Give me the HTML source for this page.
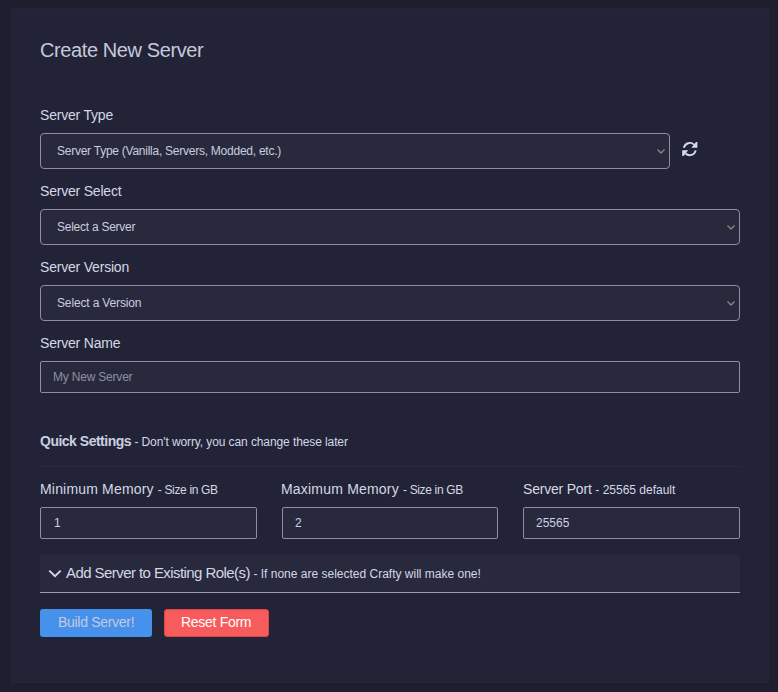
<!DOCTYPE html>
<html>
<head>
<meta charset="utf-8">
<style>
html,body{margin:0;padding:0;}
body{width:778px;height:692px;background:#1f1e2e;position:relative;overflow:hidden;font-family:"Liberation Sans",sans-serif;}
.card{position:absolute;left:11px;top:8px;width:758px;height:675px;background:#232337;box-shadow:inset 0 0 0 1px rgba(255,255,255,0.012);}
.t{position:absolute;white-space:pre;line-height:1;}
.title{left:40px;top:40px;font-size:20px;color:#c4cadb;letter-spacing:-0.4px;}
.lbl{font-size:14px;color:#d2d8e6;letter-spacing:-0.2px;}
.sel{position:absolute;left:40px;height:34px;border:1px solid #8d8da8;border-radius:4px;background:#29293e;box-sizing:content-box;}
.seltxt{font-size:12px;color:#c7cede;letter-spacing:-0.25px;}
.chev{position:absolute;width:8px;height:5px;}
.inp{position:absolute;height:30px;border:1px solid #8d8da8;border-radius:2px;background:#29293e;}
.ph{font-size:12px;color:#8b909f;letter-spacing:-0.2px;}
.hr{position:absolute;left:40px;top:466px;width:700px;height:1px;background:#2b2b3f;}
.sub{font-size:12px;color:#d2d8e6;letter-spacing:-0.2px;}
.val{font-size:12px;color:#cbd2e2;}
.coll{position:absolute;left:40px;top:555px;width:700px;height:37px;background:#29293e;border-radius:3px 3px 0 0;border-bottom:1px solid #9a9ab2;}
.btn{position:absolute;top:609px;height:28px;border-radius:3px;}
</style>
</head>
<body>
<div class="card"></div>

<div class="t title">Create New Server</div>

<!-- Server Type -->
<div class="t lbl" style="left:40px;top:108px;">Server Type</div>
<div class="sel" style="top:133px;width:628px;"></div>
<div class="t seltxt" style="left:57px;top:145px;">Server Type (Vanilla, Servers, Modded, etc.)</div>
<svg class="chev" style="left:657px;top:149px" viewBox="0 0 8 5"><path d="M0.5 0.5 L4 4 L7.5 0.5" fill="none" stroke="#86867e" stroke-width="1.35"/></svg>
<svg style="position:absolute;left:681.6px;top:141.8px;width:16px;height:15px;overflow:visible" viewBox="0 0 16 15"><g fill="none" stroke="#d3dbee" stroke-width="1.9"><path d="M1.86 5.75 A6.1 6.1 0 0 1 12.0 2.6"/><path d="M13.74 8.35 A6.1 6.1 0 0 1 3.6 11.5"/></g><g fill="#d3dbee"><path d="M14.0 0.1 L15.4 0.1 L15.4 5.8 L9.4 5.8 Z"/><path d="M0.2 8.3 L6.2 8.3 L1.6 14.0 L0.2 14.0 Z"/></g></svg>

<!-- Server Select -->
<div class="t lbl" style="left:40px;top:184px;">Server Select</div>
<div class="sel" style="top:209px;width:698px;"></div>
<div class="t seltxt" style="left:57px;top:221px;">Select a Server</div>
<svg class="chev" style="left:727px;top:225px" viewBox="0 0 8 5"><path d="M0.5 0.5 L4 4 L7.5 0.5" fill="none" stroke="#86867e" stroke-width="1.35"/></svg>

<!-- Server Version -->
<div class="t lbl" style="left:40px;top:260px;">Server Version</div>
<div class="sel" style="top:285px;width:698px;"></div>
<div class="t seltxt" style="left:57px;top:297px;letter-spacing:-0.15px">Select a Version</div>
<svg class="chev" style="left:727px;top:301px" viewBox="0 0 8 5"><path d="M0.5 0.5 L4 4 L7.5 0.5" fill="none" stroke="#86867e" stroke-width="1.35"/></svg>

<!-- Server Name -->
<div class="t lbl" style="left:40px;top:336px;">Server Name</div>
<div class="inp" style="left:40px;top:361px;width:698px;"></div>
<div class="t ph" style="left:53px;top:371px;">My New Server</div>

<!-- Quick settings -->
<div class="t" style="left:40px;top:434px;font-size:14px;font-weight:bold;color:#c9d0e0;letter-spacing:-0.5px;">Quick Settings <span class="sub" style="font-weight:normal;letter-spacing:-0.1px">- Don't worry, you can change these later</span></div>
<div class="hr"></div>

<div class="t lbl" style="left:40px;top:482px;letter-spacing:0.18px">Minimum Memory <span class="sub" style="letter-spacing:-0.35px">- Size in GB</span></div>
<div class="inp" style="left:40px;top:507px;width:215px;"></div>
<div class="t val" style="left:54px;top:517px;">1</div>

<div class="t lbl" style="left:281px;top:482px;letter-spacing:0.2px">Maximum Memory <span class="sub" style="letter-spacing:-0.35px">- Size in GB</span></div>
<div class="inp" style="left:282px;top:507px;width:214px;"></div>
<div class="t val" style="left:295px;top:517px;">2</div>

<div class="t lbl" style="left:523px;top:482px;">Server Port <span class="sub" style="letter-spacing:0px">- 25565 default</span></div>
<div class="inp" style="left:523px;top:507px;width:215px;"></div>
<div class="t val" style="left:536px;top:517px;">25565</div>

<!-- collapse -->
<div class="coll"></div>
<svg style="position:absolute;left:48.4px;top:569px;width:14px;height:9px" viewBox="0 0 14 9"><path d="M1.3 1.6 L7 7.1 L12.7 1.6" fill="none" stroke="#d2d8e6" stroke-width="2.0"/></svg>
<div class="t" style="left:66px;top:565px;font-size:15px;color:#d2d8e6;letter-spacing:-0.57px;">Add Server to Existing Role(s) <span class="sub" style="letter-spacing:0px">- If none are selected Crafty will make one!</span></div>

<!-- buttons -->
<div class="btn" style="left:40px;width:112px;background:#4691eb;"></div>
<div class="t" style="left:58px;top:615px;font-size:14px;color:#c6c8de;letter-spacing:-0.3px;">Build Server!</div>
<div class="btn" style="left:164px;width:103px;background:#f75b5b;border:1px solid #dc4646;top:609px;height:26px;"></div>
<div class="t" style="left:181px;top:615px;font-size:14px;color:#ffffff;letter-spacing:-0.3px;">Reset Form</div>

</body>
</html>
